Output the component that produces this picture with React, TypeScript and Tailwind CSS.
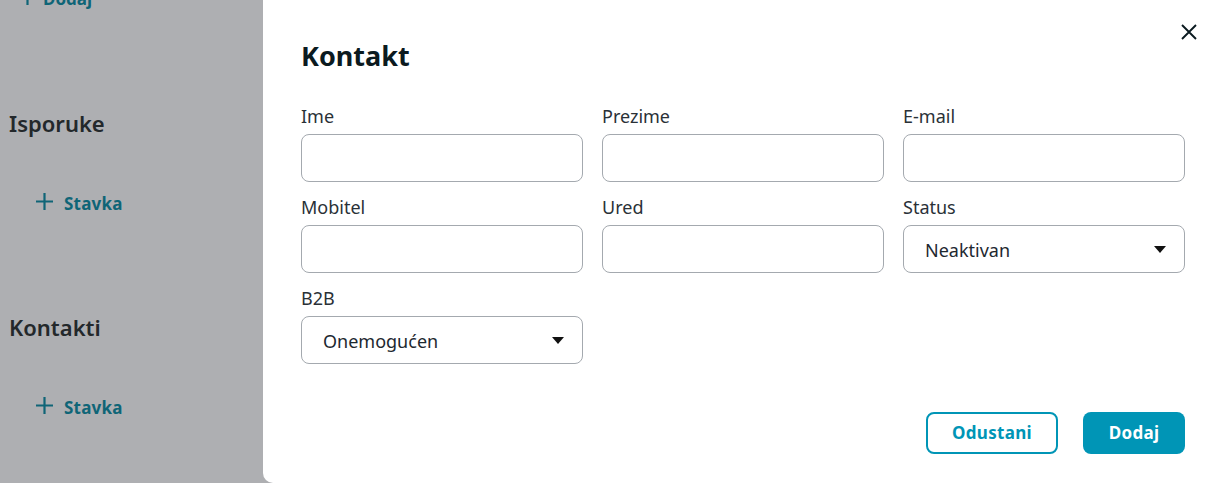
import React from "react";

const font = { fontFamily: '"Noto Sans", "Open Sans", sans-serif' };

function Plus() {
  return (
    <svg width="17" height="17" viewBox="0 0 17 17" className="mt-[1px] shrink-0">
      <path d="M8.5 0v17M0 8.5h17" stroke="#0f6577" strokeWidth="2.2" />
    </svg>
  );
}

function Caret() {
  return (
    <svg width="12" height="7" viewBox="0 0 12 7">
      <path d="M0 0h12L6 7z" fill="#111" />
    </svg>
  );
}

function Field({ label, value, select }: { label: string; value?: string; select?: boolean }) {
  return (
    <div className="flex flex-col">
      <label className="text-[18px] leading-[24px] text-[#2a3137] mb-[6px]">{label}</label>
      <div className="h-[48px] rounded-[8px] border border-[#a4a9af] bg-white flex items-center justify-between pl-[21px] pr-[18px]">
        <span className="text-[18px] text-[#1d2830] pt-[3px]">{value}</span>
        {select && <Caret />}
      </div>
    </div>
  );
}

export default function App() {
  return (
    <div className="flex w-[1221px] h-[483px] overflow-hidden bg-[#aeafb2]" style={font}>
      <aside className="w-[263px] shrink-0 flex flex-col">
        <div className="flex items-start gap-[7px] pl-[19px] mt-[-13px] h-[24px] text-[17px] leading-[24px] font-bold text-[#0f6577]">
          <Plus />
          <span>Dodaj</span>
        </div>

        <h2 className="mt-[97px] pl-[9px] text-[22px] leading-[30px] font-semibold text-[#23282b]">Isporuke</h2>
        <div className="mt-[54px] flex items-start gap-[11px] pl-[36px] h-[24px] text-[17px] leading-[24px] font-bold text-[#0f6577] tracking-[0.2px]">
          <Plus />
          <span>Stavka</span>
        </div>

        <h2 className="mt-[96px] pl-[9px] text-[22px] leading-[30px] font-semibold text-[#23282b]">Kontakti</h2>
        <div className="mt-[54px] flex items-start gap-[11px] pl-[36px] h-[24px] text-[17px] leading-[24px] font-bold text-[#0f6577] tracking-[0.2px]">
          <Plus />
          <span>Stavka</span>
        </div>
      </aside>

      <section className="flex-1 bg-white rounded-bl-[10px] pt-[24px] pl-[38px] pr-[36px] flex flex-col">
        <div className="flex items-start justify-between">
          <h1 className="mt-[14px] text-[27px] leading-[36px] font-bold text-[#0b1a20]">Kontakt</h1>
          <button className="mr-[-12px]">
            <svg width="16" height="16" viewBox="0 0 16 16">
              <path d="M1 1l14 14M15 1L1 15" stroke="#0b1a20" strokeWidth="1.9" />
            </svg>
          </button>
        </div>

        <div className="mt-[30px] grid grid-cols-[282px_282px_282px] gap-x-[19px] gap-y-[13px]">
          <Field label="Ime" />
          <Field label="Prezime" />
          <Field label="E-mail" />
          <Field label="Mobitel" />
          <Field label="Ured" />
          <Field label="Status" value="Neaktivan" select />
          <Field label="B2B" value="Onemogućen" select />
        </div>

        <div className="mt-[48px] flex justify-end gap-[25px] w-[884px]">
          <button className="w-[132px] h-[42px] rounded-[8px] border-2 border-[#0095b6] text-[17px] font-bold text-[#0095b6] tracking-[0.3px]">
            Odustani
          </button>
          <button className="w-[102px] h-[42px] rounded-[8px] bg-[#0095b6] text-[17px] font-bold text-white tracking-[0.3px]">
            Dodaj
          </button>
        </div>
      </section>
    </div>
  );
}
